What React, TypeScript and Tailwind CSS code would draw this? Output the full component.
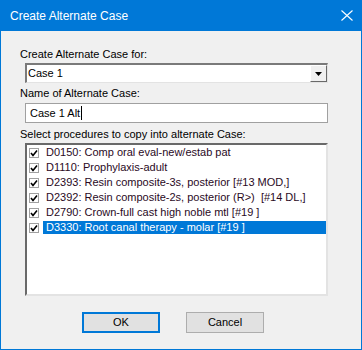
import React from "react";

const procedures = [
  "D0150: Comp oral eval-new/estab pat",
  "D1110: Prophylaxis-adult",
  "D2393: Resin composite-3s, posterior [#13 MOD,]",
  "D2392: Resin composite-2s, posterior (R>)  [#14 DL,]",
  "D2790: Crown-full cast high noble mtl [#19 ]",
  "D3330: Root canal therapy - molar [#19 ]",
];

function CheckBox() {
  return (
    <svg width="10" height="10" viewBox="0 0 10 10" className="shrink-0">
      <rect x="0.5" y="0.5" width="9" height="9" fill="#fff" stroke="#a0a0a0" />
      <path d="M2 5 L4 7.5 L8 2.5" fill="none" stroke="#000" strokeWidth="1.6" />
    </svg>
  );
}

export default function App() {
  const font = { fontFamily: '"Liberation Sans", Arial, sans-serif' };

  return (
    <div
      className="w-[362px] h-[350px] flex flex-col bg-[#f0f0f0] border-x border-b border-[#0078d7] text-[11px] text-black"
      style={font}
    >
      {/* Title bar */}
      <div className="h-[31px] shrink-0 bg-[#0078d7] flex items-center justify-between pl-[10px] pr-[9px] -mx-px">
        <span className="text-white text-[12px]">Create Alternate Case</span>
        <svg width="12" height="11" viewBox="0 0 12 11">
          <path d="M0.5 0.5 L11.5 10.5 M11.5 0.5 L0.5 10.5" stroke="#fff" strokeWidth="1.1" />
        </svg>
      </div>

      {/* Body */}
      <div className="flex flex-col pl-[19px] pr-[32px] pt-[17px] flex-1">
        <div className="leading-[13px] h-[13px]">Create Alternate Case for:</div>

        {/* Combo box */}
        <div className="ml-[5px] mt-[2px] h-[20px] w-[303px] flex border-t-2 border-l-2 border-t-[#7a7a7a] border-l-[#7a7a7a] border-b border-r border-b-[#e3e3e3] border-r-[#e3e3e3] bg-white">
          <div className="flex-1 pl-[1px] leading-[17px]">Case 1</div>
          <div className="w-[17px] h-[17px] bg-[#f0f0f0] border-b border-r border-b-[#696969] border-r-[#696969] border-t border-l border-t-white border-l-white flex items-center justify-center">
            <svg width="7" height="4" viewBox="0 0 7 4">
              <path d="M0 0 H7 L3.5 4 Z" fill="#000" />
            </svg>
          </div>
        </div>

        <div className="leading-[13px] h-[13px] mt-[4px]">Name of Alternate Case:</div>

        {/* Text box */}
        <div className="ml-[5px] mt-[3px] h-[20px] w-[303px] border border-[#a0a0a0] bg-white flex items-center pl-[4px]">
          <span>Case 1 Alt</span>
          <span className="w-px h-[14px] bg-black ml-px" />
        </div>

        <div className="leading-[13px] h-[13px] mt-[5px]">Select procedures to copy into alternate Case:</div>

        {/* List box */}
        <div className="ml-[5px] mt-[2px] h-[153px] w-[303px] border-t-2 border-l-2 border-t-[#696969] border-l-[#696969] border-b-2 border-r-2 border-b-[#e3e3e3] border-r-[#e3e3e3] bg-white flex flex-col">
          {procedures.map((p, i) => {
            const selected = i === procedures.length - 1;
            return (
              <div key={p} className="h-[15px] flex items-center pl-[2px]">
                <CheckBox />
                <div
                  className={`ml-[4px] flex-1 h-[13px] leading-[13px] pl-[3px] whitespace-pre ${
                    selected ? "bg-[#0078d7] text-white" : "text-[#2a0a1e]"
                  }`}
                >
                  {p}
                </div>
              </div>
            );
          })}
        </div>

        {/* Buttons */}
        <div className="flex mt-[16px] ml-[62px] gap-[26px]">
          <button className="w-[78px] h-[21px] bg-[#e1e1e1] border-2 border-[#0078d7] text-[11px] leading-[17px]">
            OK
          </button>
          <button className="w-[78px] h-[21px] bg-[#e1e1e1] border border-[#adadad] text-[11px] leading-[19px]">
            Cancel
          </button>
        </div>
      </div>
    </div>
  );
}
